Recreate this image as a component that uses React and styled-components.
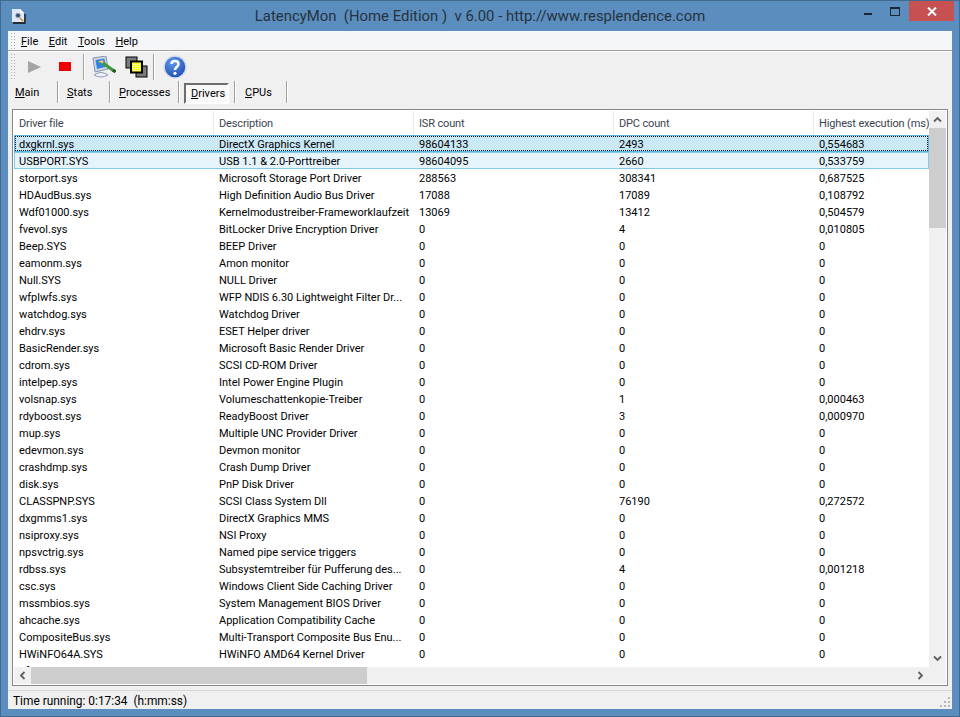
import React from 'react'
import styled, { createGlobalStyle } from 'styled-components'

const Global = createGlobalStyle`
    html, body { margin: 0; padding: 0; background: #5a8dbd; }
    * { box-sizing: border-box; }
`

const Window = styled.div`
    width: 960px;
    height: 717px;
    display: flex;
    flex-direction: column;
    padding: 0 7px 7px;
    background: #5b8ebe;
    border: 1px solid #42698f;
    font-family: Roboto, "Open Sans", sans-serif;
    font-size: 11px;
    color: #000;
    overflow: hidden;
`

const TitleBar = styled.div`
    height: 30px;
    flex: none;
    display: flex;
    align-items: flex-start;
    position: relative;
    margin: 0 -1px;
`

const AppIcon = styled.svg`
    width: 16px;
    height: 16px;
    margin: 7px 0 0 4px;
`

const Title = styled.div`
    position: absolute;
    left: 0;
    right: 0;
    top: 6px;
    text-align: center;
    font-size: 14.9px;
    white-space: pre;
    color: #26323d;
`

const Caption = styled.div`
    margin-left: auto;
    display: flex;
    align-items: center;
    height: 20px;
`

const CaptionButton = styled.div`
    width: ${ props => props.wide ? '45px' : '27px' };
    height: 20px;
    display: flex;
    align-items: center;
    justify-content: center;
    background: ${ props => props.wide ? '#c75050' : 'transparent' };
    margin-right: ${ props => props.wide ? '-1px' : '0' };
`

const Client = styled.div`
    flex: 1;
    display: flex;
    flex-direction: column;
    background: #f0f0f0;
    min-height: 0;
`

const MenuBar = styled.div`
    height: 20px;
    flex: none;
    display: flex;
    align-items: center;
    padding: 1px 0 0 2px;
    background: #f5f6f7;
    border-bottom: 1px solid #a0a0a0;
    box-shadow: 0 1px 0 #fff;
`

const MenuItem = styled.span`
    margin-right: 10.5px;
`

const Toolbar = styled.div`
    height: 29px;
    margin-top: 1px;
    flex: none;
    display: flex;
    align-items: center;
    padding-left: 2px;
`

const Gripper = styled.div`
    width: 5px;
    height: ${ props => props.h }px;
    margin-right: ${ props => props.gap }px;
    background-image: radial-gradient(circle, #b0b0b0 0.8px, transparent 1px);
    background-size: 3px 3px;
`

const ToolButton = styled.div`
    width: ${ props => props.w }px;
    height: 26px;
    padding-left: ${ props => props.pad || 8 }px;
    display: flex;
    align-items: center;
`

const ToolSep = styled.div`
    width: 1px;
    height: 26px;
    background: #a0a0a0;
    box-shadow: 1px 0 0 #fff;
`

const Tabs = styled.div`
    height: 24px;
    flex: none;
    display: flex;
    align-items: center;
    padding: 0 0 2px 7px;
`

const Tab = styled.div`
    height: ${ props => props.active ? '21px' : '22px' };
    padding-left: ${ props => props.active ? '5px' : `${ props.pad }px` };
    width: ${ props => props.w }px;
    display: flex;
    align-items: center;
    margin: ${ props => props.active ? '2px 5px 0 5px' : '0' };
    background: ${ props => props.active ? '#f8f8f8' : 'transparent' };
    border: ${ props => props.active ? '2px solid' : '0' };
    border-color: #6d6d6d #fff #fff #6d6d6d;
`

const TabSep = styled.div`
    width: 1px;
    height: 22px;
    background: #a0a0a0;
    box-shadow: 1px 0 0 #fff;
`

const List = styled.div`
    flex: 1;
    margin: 4px 4px 4px;
    min-height: 0;
    border: 1px solid #828790;
    background: #fff;
    padding: 1px;
    display: grid;
    grid-template-columns: 1fr 17px;
    grid-template-rows: 1fr 17px;
`

const ListBody = styled.div`
    overflow: hidden;
    min-width: 0;
    min-height: 0;
`

const HeaderRow = styled.div`
    height: 24px;
    display: flex;
`

const HeaderCell = styled.div`
    width: 200px;
    flex: none;
    padding: 0 0 0 5px;
    display: flex;
    align-items: center;
    white-space: nowrap;
    letter-spacing: -0.15px;
    color: #3a4450;
    border-right: 1px solid #e6eef5;
`

const Row = styled.div`
    height: 17px;
    display: flex;
    position: relative;
    background: ${ props => props.state === 'focus' ? '#cbe8f6' : props.state === 'select' ? '#e5f3fb' : 'transparent' };
    box-shadow: ${ props => props.state === 'select' ? 'inset 0 0 0 1px #84c9ec' : props.state === 'focus' ? 'inset 0 0 0 1px #5cb3e0' : 'none' };
`

const FocusFrame = styled.div`
    position: absolute;
    inset: 1px;
    border: 1px dotted #111;
    pointer-events: none;
`

const Cell = styled.div`
    width: 200px;
    height: 17px;
    flex: none;
    padding: 1px 0 0 5px;
    white-space: nowrap;
    overflow: hidden;
    line-height: 17px;
`

const VBar = styled.div`
    background: #f0f0f0;
    display: flex;
    flex-direction: column;
    min-height: 0;
`

const HBar = styled.div`
    background: #f0f0f0;
    display: flex;
    align-items: stretch;
`

const Arrow = styled.div`
    width: 17px;
    height: 17px;
    flex: none;
    display: flex;
    align-items: center;
    justify-content: center;
    margin: ${ props => props.$place || '0' };
`

const VThumb = styled.div`
    height: 100px;
    background: #cdcdcd;
`

const HThumb = styled.div`
    width: 336px;
    background: #cdcdcd;
`

const Corner = styled.div`
    background: #f0f0f0;
`

const Status = styled.div`
    height: 19px;
    flex: none;
    display: flex;
    align-items: center;
    padding: 2px 0 0 5px;
    border-top: 1px solid #d7d7d7;
    font-size: 11.9px;
    white-space: pre;
    position: relative;
`

const Grip = styled.svg`
    position: absolute;
    right: 2px;
    bottom: 2px;
    width: 10px;
    height: 10px;
`

const Chevron = ({ dir }) => {
    const rot = { up: 0, right: 90, down: 180, left: 270 }[dir]
    return (
        <svg width="9" height="7" viewBox="0 0 9 7" style={{ transform: `rotate(${ rot }deg)` }}>
            <path d="M1 5.5 L4.5 2 L8 5.5" fill="none" stroke="#5f5f5f" strokeWidth="1.8" />
        </svg>
    )
}

const rows = [
    ['dxgkrnl.sys', 'DirectX Graphics Kernel', '98604133', '2493', '0,554683'],
    ['USBPORT.SYS', 'USB 1.1 & 2.0-Porttreiber', '98604095', '2660', '0,533759'],
    ['storport.sys', 'Microsoft Storage Port Driver', '288563', '308341', '0,687525'],
    ['HDAudBus.sys', 'High Definition Audio Bus Driver', '17088', '17089', '0,108792'],
    ['Wdf01000.sys', 'Kernelmodustreiber-Frameworklaufzeit', '13069', '13412', '0,504579'],
    ['fvevol.sys', 'BitLocker Drive Encryption Driver', '0', '4', '0,010805'],
    ['Beep.SYS', 'BEEP Driver', '0', '0', '0'],
    ['eamonm.sys', 'Amon monitor', '0', '0', '0'],
    ['Null.SYS', 'NULL Driver', '0', '0', '0'],
    ['wfplwfs.sys', 'WFP NDIS 6.30 Lightweight Filter Dr...', '0', '0', '0'],
    ['watchdog.sys', 'Watchdog Driver', '0', '0', '0'],
    ['ehdrv.sys', 'ESET Helper driver', '0', '0', '0'],
    ['BasicRender.sys', 'Microsoft Basic Render Driver', '0', '0', '0'],
    ['cdrom.sys', 'SCSI CD-ROM Driver', '0', '0', '0'],
    ['intelpep.sys', 'Intel Power Engine Plugin', '0', '0', '0'],
    ['volsnap.sys', 'Volumeschattenkopie-Treiber', '0', '1', '0,000463'],
    ['rdyboost.sys', 'ReadyBoost Driver', '0', '3', '0,000970'],
    ['mup.sys', 'Multiple UNC Provider Driver', '0', '0', '0'],
    ['edevmon.sys', 'Devmon monitor', '0', '0', '0'],
    ['crashdmp.sys', 'Crash Dump Driver', '0', '0', '0'],
    ['disk.sys', 'PnP Disk Driver', '0', '0', '0'],
    ['CLASSPNP.SYS', 'SCSI Class System Dll', '0', '76190', '0,272572'],
    ['dxgmms1.sys', 'DirectX Graphics MMS', '0', '0', '0'],
    ['nsiproxy.sys', 'NSI Proxy', '0', '0', '0'],
    ['npsvctrig.sys', 'Named pipe service triggers', '0', '0', '0'],
    ['rdbss.sys', 'Subsystemtreiber für Pufferung des...', '0', '4', '0,001218'],
    ['csc.sys', 'Windows Client Side Caching Driver', '0', '0', '0'],
    ['mssmbios.sys', 'System Management BIOS Driver', '0', '0', '0'],
    ['ahcache.sys', 'Application Compatibility Cache', '0', '0', '0'],
    ['CompositeBus.sys', 'Multi-Transport Composite Bus Enu...', '0', '0', '0'],
    ['HWiNFO64A.SYS', 'HWiNFO AMD64 Kernel Driver', '0', '0', '0'],
    ['dfsc.sys', 'DFS Namespace Client Driver', '0', '0', '0'],
]

const columns = ['Driver file', 'Description', 'ISR count', 'DPC count', 'Highest execution (ms)']

const tabs = [
    { key: 'M', rest: 'ain', w: 42, pad: 0 },
    { key: 'S', rest: 'tats', w: 51, pad: 9 },
    { key: 'P', rest: 'rocesses', w: 68, pad: 9 },
    { key: 'D', rest: 'rivers', w: 45, active: true },
    { key: 'C', rest: 'PUs', w: 51, pad: 10 },
]

const App = () => (
    <Window>
        <Global />
        <TitleBar>
            <AppIcon viewBox="0 0 16 16">
                <path d="M1 1 H9 L13 5 V14 H1 Z" fill="#dfe9f5" />
                <path d="M9 1 L13 5 H9 Z" fill="#fff" />
                <path d="M2 15 H14 V6" fill="none" stroke="#111" strokeWidth="1.3" />
                <circle cx="7" cy="7.5" r="2.4" fill="#3d4a66" stroke="#9fb6d4" />
                <path d="M9 10 L12 13" stroke="#e08a2a" strokeWidth="1.6" />
            </AppIcon>
            <Title>LatencyMon  (Home Edition )  v 6.00 - http://www.resplendence.com</Title>
            <Caption>
                <CaptionButton>
                    <svg width="9" height="10"><rect width="8" height="2" y="7" fill="#1c2733" /></svg>
                </CaptionButton>
                <CaptionButton>
                    <svg width="11" height="9"><rect x="0.5" y="0.5" width="9" height="8" fill="none" stroke="#1c2733" /><rect width="10" height="2" fill="#1c2733" /></svg>
                </CaptionButton>
                <CaptionButton wide>
                    <svg width="10" height="9" viewBox="0 0 10 9"><path d="M1 0.5 L9 8.5 M9 0.5 L1 8.5" stroke="#fff" strokeWidth="2" /></svg>
                </CaptionButton>
            </Caption>
        </TitleBar>
        <Client>
            <MenuBar>
                <Gripper h={ 18 } gap={ 6 } />
                <MenuItem><u>F</u>ile</MenuItem>
                <MenuItem><u>E</u>dit</MenuItem>
                <MenuItem><u>T</u>ools</MenuItem>
                <MenuItem><u>H</u>elp</MenuItem>
            </MenuBar>
            <Toolbar>
                <Gripper h={ 27 } gap={ 5 } />
                <ToolButton w={ 31 }>
                    <svg width="13" height="12"><path d="M0 0 L13 6 L0 12 Z" fill="#a5a5a5" /></svg>
                </ToolButton>
                <ToolButton w={ 32 }>
                    <svg width="12" height="9"><rect width="12" height="9" fill="#f00000" /></svg>
                </ToolButton>
                <ToolSep />
                <ToolButton w={ 33 }>
                    <svg width="24" height="22" viewBox="0 0 24 22">
                        <path d="M1 2 L14 0 L16 13 L3 16 Z" fill="#cfd6e6" stroke="#8793b0" />
                        <path d="M3.5 4 L12.5 2.5 L13.5 11 L5 13 Z" fill="#2f86d8" />
                        <path d="M2 19 Q9 14 16 19 Q9 23 2 19 Z" fill="#eef1f7" stroke="#8f9bb8" />
                        <path d="M6 5.5 L11 4 L12 8 Z" fill="#f2c65b" />
                        <path d="M11 7 L22 15" stroke="#3f9a3f" strokeWidth="3.2" />
                        <path d="M21 14 L23.5 16" stroke="#1c5c1c" strokeWidth="3" />
                    </svg>
                </ToolButton>
                <ToolButton w={ 36 }>
                    <svg width="23" height="22" viewBox="0 0 23 22">
                        <defs>
                            <pattern id="dither" width="2" height="2" patternUnits="userSpaceOnUse">
                                <rect width="2" height="2" fill="#ffff20" />
                                <rect width="1" height="1" fill="#fff" />
                            </pattern>
                        </defs>
                        <rect x="1" y="1" width="11" height="11" fill="#7b7b7b" stroke="#000" />
                        <rect x="11" y="10" width="11" height="11" fill="#7b7b7b" stroke="#000" />
                        <rect x="6" y="5.5" width="11" height="11" fill="url(#dither)" stroke="#000" strokeWidth="2" />
                    </svg>
                </ToolButton>
                <ToolSep />
                <ToolButton w={ 42 } pad={ 9 }>
                    <svg width="24" height="24" viewBox="0 0 24 24">
                        <defs>
                            <radialGradient id="helpBlue" cx="0.4" cy="0.3" r="0.8">
                                <stop offset="0" stopColor="#5f97ea" />
                                <stop offset="1" stopColor="#1a47ae" />
                            </radialGradient>
                        </defs>
                        <circle cx="12" cy="12" r="11" fill="url(#helpBlue)" stroke="#d5deee" strokeWidth="1.5" />
                        <path d="M8.5 9 C8.5 5 15.5 5 15.5 9 C15.5 12 12 12 12 15" fill="none" stroke="#fff" strokeWidth="2.5" />
                        <circle cx="12" cy="18.3" r="1.6" fill="#fff" />
                    </svg>
                </ToolButton>
            </Toolbar>
            <Tabs>
                { tabs.map(tab => (
                    <React.Fragment key={ tab.key }>
                        <Tab w={ tab.w } pad={ tab.pad } active={ tab.active }><span><u>{ tab.key }</u>{ tab.rest }</span></Tab>
                        <TabSep />
                    </React.Fragment>
                )) }
            </Tabs>
            <List>
                <ListBody>
                    <HeaderRow>
                        { columns.map(col => <HeaderCell key={ col }>{ col }</HeaderCell>) }
                    </HeaderRow>
                    { rows.map((row, i) => (
                        <Row key={ row[0] } state={ i === 0 ? 'focus' : i === 1 ? 'select' : undefined }>
                            { row.map((value, j) => <Cell key={ j }>{ value }</Cell>) }
                            { i === 0 && <FocusFrame /> }
                        </Row>
                    )) }
                </ListBody>
                <VBar>
                    <Arrow><Chevron dir="up" /></Arrow>
                    <VThumb />
                    <Arrow $place="auto 0 0"><Chevron dir="down" /></Arrow>
                </VBar>
                <HBar>
                    <Arrow><Chevron dir="left" /></Arrow>
                    <HThumb />
                    <Arrow $place="0 0 0 auto"><Chevron dir="right" /></Arrow>
                </HBar>
                <Corner />
            </List>
            <Status>
                Time running: 0:17:34  (h:mm:ss)
                <Grip viewBox="0 0 10 10">
                    <path d="M8 0h2v2H8z M8 4h2v2H8z M4 4h2v2H4z M8 8h2v2H8z M4 8h2v2H4z M0 8h2v2H0z" fill="#b8b8b8" />
                </Grip>
            </Status>
        </Client>
    </Window>
)

export default App
